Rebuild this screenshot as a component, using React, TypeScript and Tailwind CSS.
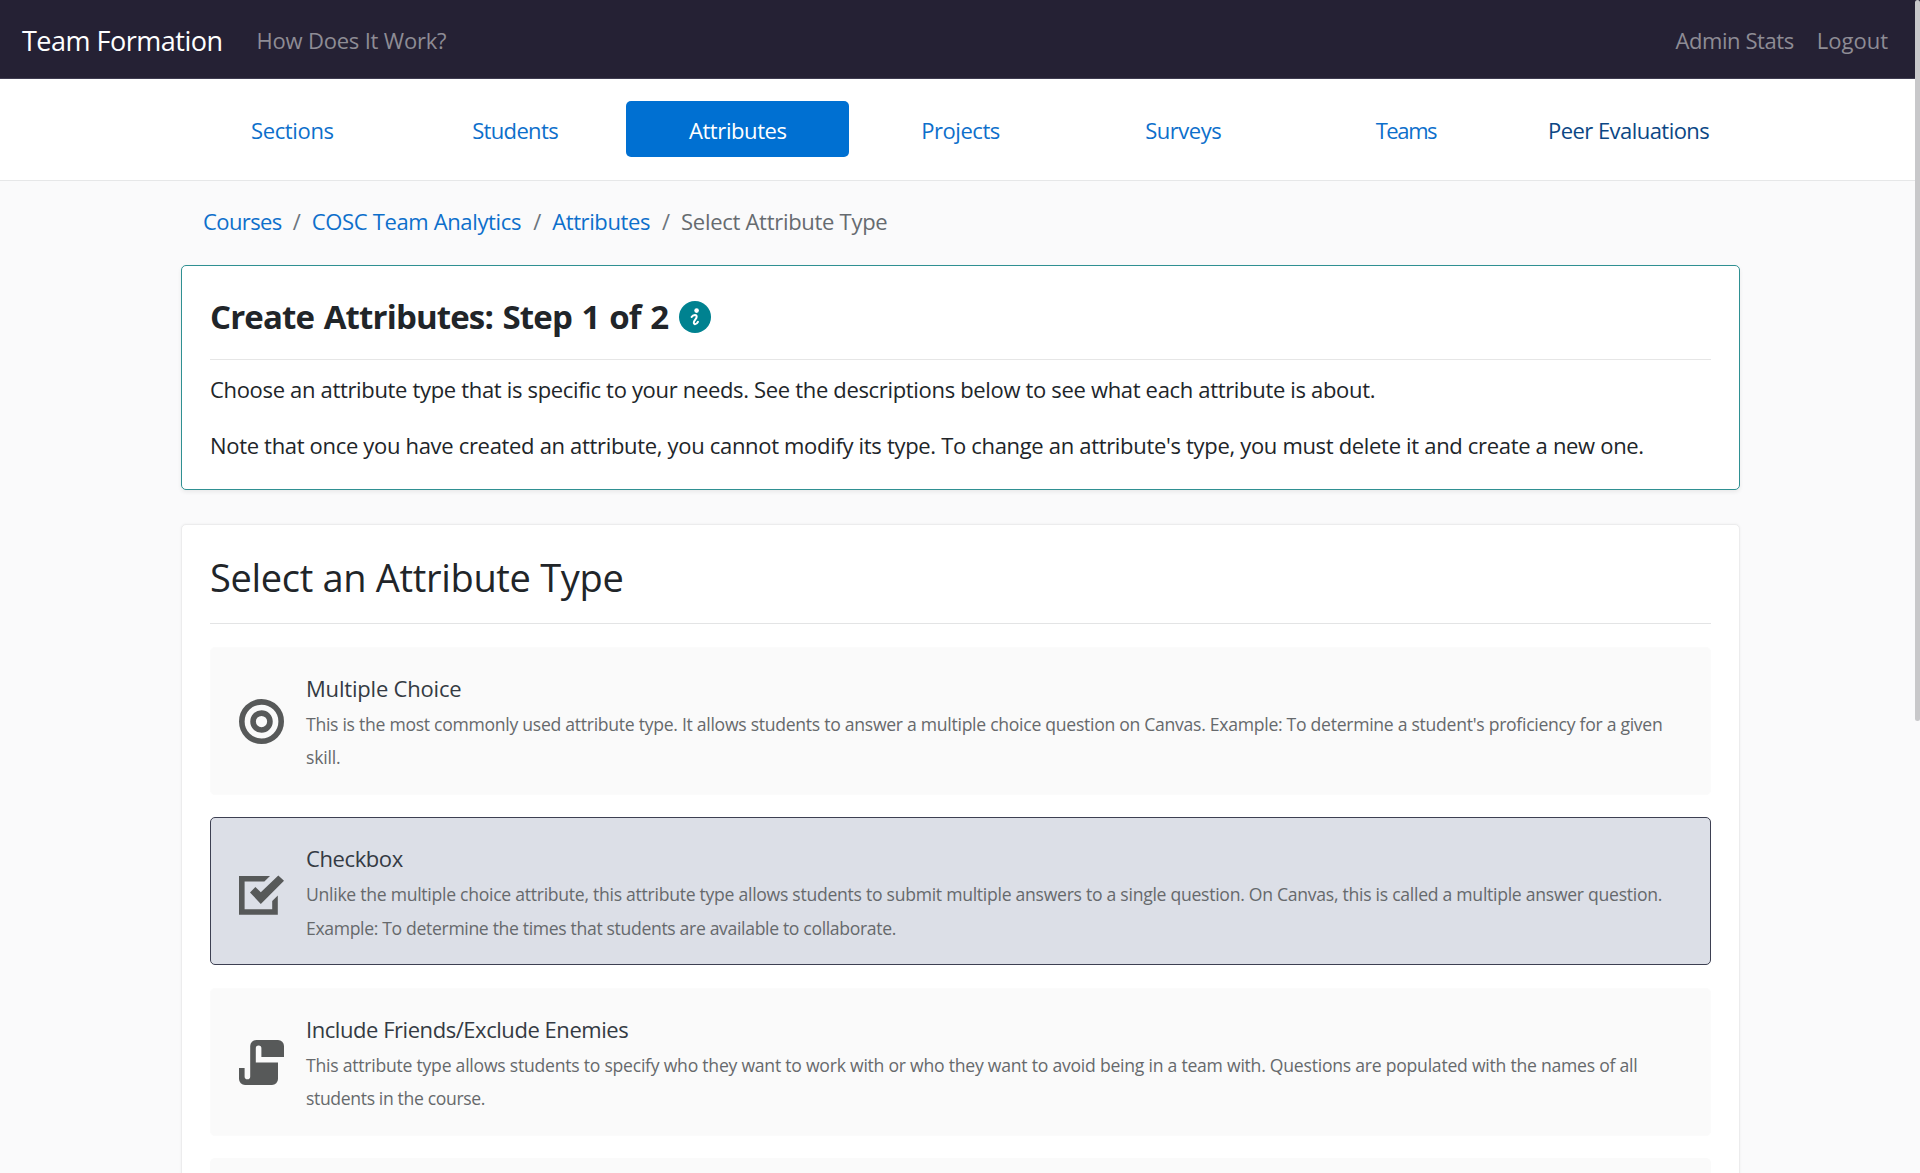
import type { ReactNode } from "react";

const tabs = [
  { label: "Sections", cls: "text-[#0d6fcb] tracking-[-0.35px]" },
  { label: "Students", cls: "text-[#0d6fcb] tracking-[-0.65px]" },
  { label: "Attributes", cls: "bg-[#0070d2] text-white tracking-[-0.4px]" },
  { label: "Projects", cls: "text-[#0d6fcb] tracking-[-0.45px]" },
  { label: "Surveys", cls: "text-[#0d6fcb] tracking-[-0.5px]" },
  { label: "Teams", cls: "text-[#0d6fcb] tracking-[-1.4px]" },
  { label: "Peer Evaluations", cls: "text-[#0b4785] tracking-[-0.55px]" },
];

function TargetIcon() {
  return (
    <svg width="45" height="45" viewBox="0 0 20 20" fill="none" stroke="currentColor" strokeWidth="2.5">
      <circle cx="10" cy="10" r="8.75" />
      <circle cx="10" cy="10" r="3.75" />
    </svg>
  );
}

function CheckboxIcon() {
  return (
    <svg width="45" height="45" viewBox="0 -6 45 45" fill="currentColor">
      <path d="M0 0H31L25.4 5.6H5.6V33.2H33.2V25L38.8 19.4V38.8H0Z" />
      <path d="M11 16.4L16.4 11L21.8 16.2L39.3 -.4L45 4.8L21.8 28Z" />
    </svg>
  );
}

function ScrollIcon() {
  return (
    <svg width="45" height="45" viewBox="0 0 45 45" fill="currentColor">
      <path d="M0 28H5.6V36.4A2.8 2.8 0 0 0 11.2 36.4V6A6 6 0 0 1 17.2 0H39A6 6 0 0 1 45 6V16.9H22.4V8.4A2.8 2.8 0 0 0 16.8 8.4V22.4H39V39A6 6 0 0 1 33 45H6A6 6 0 0 1 0 39Z" />
    </svg>
  );
}

function InfoIcon() {
  return (
    <svg className="mt-1 ml-[11px]" width="32" height="32" viewBox="0 0 32 32">
      <circle cx="16" cy="16" r="16" fill="#008290" />
      <circle cx="17.6" cy="9.6" r="2.3" fill="white" />
      <path d="M12.6 16Q13.8 13.9 15.8 13.9Q18.4 14 17.4 16.8L15.2 20.2Q14.2 22.8 16 23.2Q17.8 23.2 19 20.8" fill="none" stroke="white" strokeWidth="2" strokeLinecap="round" />
    </svg>
  );
}

type Option = { title: string; titleCls: string; icon: ReactNode; lines: { text: string; cls: string }[]; selected?: boolean };

const options: Option[] = [
  {
    title: "Multiple Choice",
    titleCls: "tracking-[-0.19px]",
    icon: <TargetIcon />,
    lines: [
      { text: "This is the most commonly used attribute type. It allows students to answer a multiple choice question on Canvas. Example: To determine a student's proficiency for a given", cls: "tracking-[-0.283px]" },
      { text: "skill.", cls: "tracking-[-0.2px]" },
    ],
  },
  {
    title: "Checkbox",
    titleCls: "tracking-[-0.4px]",
    icon: <CheckboxIcon />,
    selected: true,
    lines: [
      { text: "Unlike the multiple choice attribute, this attribute type allows students to submit multiple answers to a single question. On Canvas, this is called a multiple answer question.", cls: "tracking-[-0.276px]" },
      { text: "Example: To determine the times that students are available to collaborate.", cls: "tracking-[-0.34px]" },
    ],
  },
  {
    title: "Include Friends/Exclude Enemies",
    titleCls: "tracking-[-0.45px]",
    icon: <ScrollIcon />,
    lines: [
      { text: "This attribute type allows students to specify who they want to work with or who they want to avoid being in a team with. Questions are populated with the names of all", cls: "tracking-[-0.24px]" },
      { text: "students in the course.", cls: "tracking-[-0.36px]" },
    ],
  },
];

function OptionCard({ option }: { option: Option }) {
  return (
    <div
      className={
        option.selected
          ? "flex h-[148px] items-center rounded-[5px] border border-[#3d4052] bg-[#dcdfe7] pl-7"
          : "flex h-[148px] items-center rounded-[5px] border border-[#fbfbfb] bg-[#fafafa] pl-7"
      }
    >
      <div className="mt-[2px] mr-[22px] text-[#575959]">{option.icon}</div>
      <div className="pt-1 whitespace-nowrap">
        <div className={`mb-[3px] text-[22px] leading-[34px] text-[#343a43] ${option.titleCls}`}>{option.title}</div>
        {option.lines.map((line) => (
          <div key={line.text} className={`text-[17.6px] leading-[33.6px] text-[#66696c] ${line.cls}`}>
            {line.text}
          </div>
        ))}
      </div>
    </div>
  );
}

export default function App() {
  return (
    <div className="relative flex h-[1173px] w-[1920px] flex-col overflow-hidden bg-[#fafafb] font-['Open_Sans','Noto_Sans',sans-serif] text-[22px] leading-[34px] whitespace-nowrap text-[#212529]">
      <header className="flex h-[79px] shrink-0 items-center border-b border-[#3f3c50] bg-[#252134] pt-[3px] pr-8 pl-[22px] text-[#8e8c95]">
        <span className="text-[27px] tracking-[-0.5px] text-white">Team Formation</span>
        <span className="mb-0.5 ml-[34px] tracking-[-0.2px]">How Does It Work?</span>
        <span className="mb-0.5 ml-auto tracking-[-0.43px]">Admin Stats</span>
        <span className="mb-0.5 ml-[23px]">Logout</span>
      </header>

      <nav className="flex h-[102px] shrink-0 border-b border-[#e6e7e8] bg-white pt-[22px] pl-[181px]">
        <div className="grid h-14 w-[1559px] grid-cols-7">
          {tabs.map((tab) => (
            <div key={tab.label} className={`flex items-center justify-center rounded-[5px] pt-px ${tab.cls}`}>
              {tab.label}
            </div>
          ))}
        </div>
      </nav>

      <main className="ml-[181px] w-[1559px]">
        <div className="flex pt-[23px] pl-[22px] text-[#0d6fcb]">
          <span className="tracking-[-0.6px]">Courses</span>
          <span className="mx-[11px] text-[#6c757d]">/</span>
          <span className="tracking-[-0.35px]">COSC Team Analytics</span>
          <span className="mr-[11px] ml-[12px] text-[#6c757d]">/</span>
          <span className="tracking-[-0.4px]">Attributes</span>
          <span className="mr-[11px] ml-[12px] text-[#6c757d]">/</span>
          <span className="tracking-[-0.29px] text-[#666b70]">Select Attribute Type</span>
        </div>

        <section className="mt-[27px] h-[225px] rounded-[5px] border border-[#2f9092] bg-white px-7 shadow-[0_2px_4px_rgba(0,0,0,0.07)]">
          <div className="flex h-[94px] items-start border-b border-[#e6e6e6] pt-[31px]">
            <h1 className="text-[33px] leading-[40px] font-bold tracking-[-0.86px] [word-spacing:1.9px]">Create Attributes: Step 1 of 2</h1>
            <InfoIcon />
          </div>
          <p className="mt-3 tracking-[-0.33px]">Choose an attribute type that is specific to your needs. See the descriptions below to see what each attribute is about.</p>
          <p className="mt-[22px] tracking-[-0.32px]">Note that once you have created an attribute, you cannot modify its type. To change an attribute's type, you must delete it and create a new one.</p>
        </section>

        <section className="mt-[34px] h-[800px] rounded-[5px] border border-[#ececed] bg-white px-7 shadow-[0_0_3px_rgba(0,0,0,0.05)]">
          <div className="h-[99px] border-b border-[#e3e4e5] pt-7">
            <h2 className="text-[38px] leading-[48px] tracking-[-0.32px]">Select an Attribute Type</h2>
          </div>
          <div className="mt-[22.6px] flex flex-col gap-[22.5px]">
            {options.map((option) => (
              <OptionCard key={option.title} option={option} />
            ))}
            <div className="h-[148px] rounded-[5px] bg-[#fafafa]" />
          </div>
        </section>
      </main>

      <div className="absolute top-0 right-0 h-[721px] w-[5px] rounded-full bg-[#c8c8ca]" />
    </div>
  );
}
